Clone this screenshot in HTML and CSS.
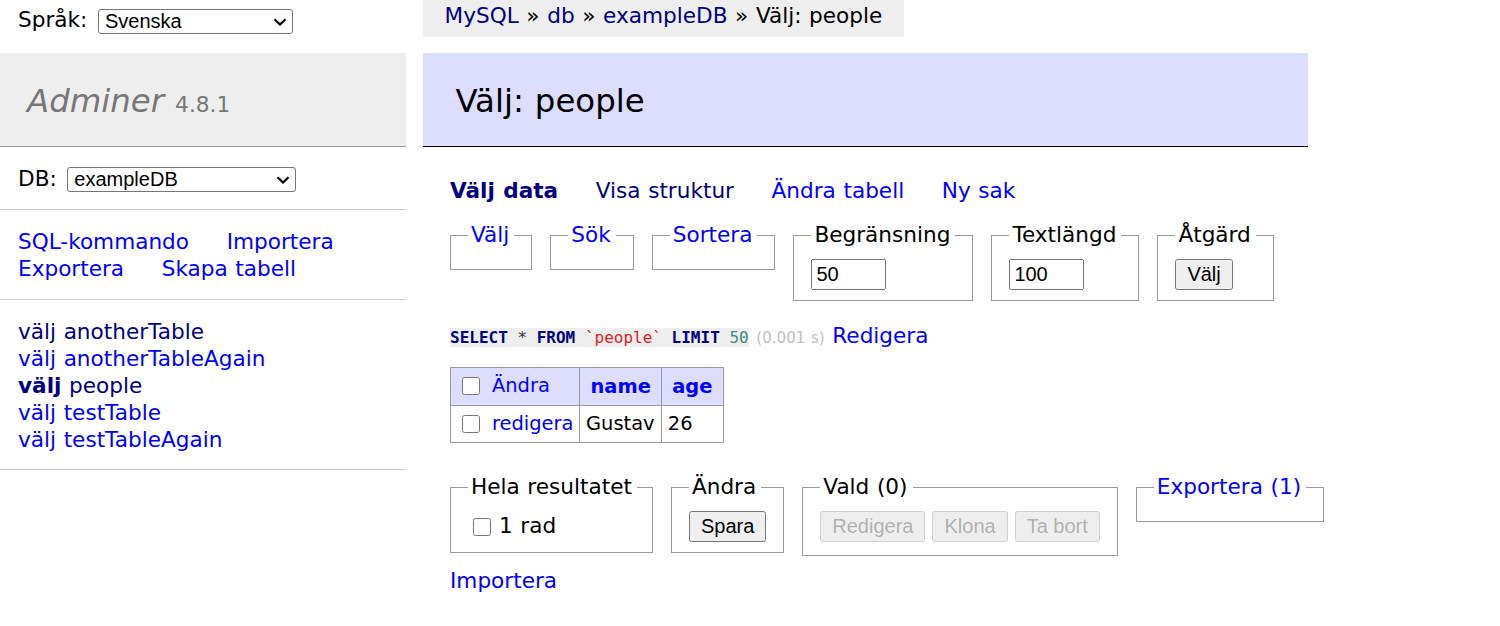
FILE: index.html
```html
<!DOCTYPE html>
<html lang="sv">
<head>
<meta charset="utf-8">
<title>Välj: people - exampleDB - Adminer</title>
<link rel="stylesheet" href="styles.css">
</head>
<body>
<div class="page">
  <aside class="sidebar">
    <form class="lang">
      <label>Språk: <span class="select-wrap select-lang"><select class="select"><option>Svenska</option></select><svg class="chevron" viewBox="0 0 14 8" aria-hidden="true"><path d="M1.5 1.2 7 6.5l5.5-5.3"/></svg></span></label>
    </form>
    <div class="menu">
      <h1 class="logo"><a class="logo-name" href="#">Adminer</a> <span class="version">4.8.1</span></h1>
      <p class="menu-section db-row">DB: <span class="select-wrap select-db"><select class="select"><option>exampleDB</option></select><svg class="chevron" viewBox="0 0 14 8" aria-hidden="true"><path d="M1.5 1.2 7 6.5l5.5-5.3"/></svg></span></p>
      <p class="menu-section menu-links links"><a href="#">SQL-kommando</a> <a href="#">Importera</a> <a href="#">Exportera</a> <a href="#">Skapa tabell</a></p>
      <ul class="menu-section tables">
        <li><a class="visited" href="#">välj</a> <a class="visited" href="#">anotherTable</a></li>
        <li><a href="#">välj</a> <a href="#">anotherTableAgain</a></li>
        <li><a class="visited active" href="#">välj</a> <a class="visited" href="#">people</a></li>
        <li><a href="#">välj</a> <a href="#">testTable</a></li>
        <li><a href="#">välj</a> <a href="#">testTableAgain</a></li>
      </ul>
    </div>
  </aside>
  <main class="main">
    <p class="breadcrumb"><a class="visited" href="#">MySQL</a> » <a class="visited" href="#">db</a> » <a class="visited" href="#">exampleDB</a> » Välj: people</p>
    <h2 class="title">Välj: people</h2>
    <div class="content">
      <p class="links tabs"><a class="visited active" href="#">Välj data</a> <a class="visited" href="#">Visa struktur</a> <a href="#">Ändra tabell</a> <a href="#">Ny sak</a></p>
      <form class="fs-row fs-top">
        <fieldset><legend><a href="#">Välj</a></legend></fieldset>
        <fieldset><legend><a href="#">Sök</a></legend></fieldset>
        <fieldset><legend><a href="#">Sortera</a></legend></fieldset>
        <fieldset><legend>Begränsning</legend><input class="num" type="text" value="50"></fieldset>
        <fieldset><legend>Textlängd</legend><input class="num" type="text" value="100"></fieldset>
        <fieldset><legend>Åtgärd</legend><button type="button" class="btn">Välj</button></fieldset>
      </form>
      <p class="sql"><code class="jush"><a class="kw" href="#">SELECT</a> <span class="op">*</span> <a class="kw" href="#">FROM</a> <span class="bac">`people`</span> <a class="kw" href="#">LIMIT</a> <span class="num-lit">50</span></code> <span class="time">(0.001 s)</span> <a href="#">Redigera</a></p>
      <table class="data">
        <thead>
          <tr>
            <td><input type="checkbox" class="check"> <a href="#">Ändra</a></td>
            <th><a href="#">name</a></th>
            <th><a href="#">age</a></th>
          </tr>
        </thead>
        <tbody>
          <tr>
            <td><input type="checkbox" class="check"> <a href="#">redigera</a></td>
            <td>Gustav</td>
            <td>26</td>
          </tr>
        </tbody>
      </table>
      <div class="footer">
        <div class="fs-row fs-footer">
          <fieldset><legend>Hela resultatet</legend><label class="all"><input type="checkbox" class="check check-all">1 rad</label></fieldset>
          <fieldset><legend>Ändra</legend><button type="button" class="btn">Spara</button></fieldset>
          <fieldset><legend>Vald (0)</legend><div class="btn-group"><button type="button" class="btn" disabled>Redigera</button><button type="button" class="btn" disabled>Klona</button><button type="button" class="btn" disabled>Ta bort</button></div></fieldset>
          <fieldset><legend><a href="#">Exportera (1)</a></legend></fieldset>
        </div>
        <p class="import"><a href="#">Importera</a></p>
      </div>
    </div>
  </main>
</div>
</body>
</html>
```

FILE: styles.css
```css
html, body {
  margin: 0;
  padding: 0;
}

body {
  font: 21.6px/1.25 "DejaVu Sans", Verdana, sans-serif;
  word-spacing: 0.75px;
  color: #000;
  background: #fff;
}

a {
  color: #0000ff;
  text-decoration: none;
}

a.visited {
  color: #000080;
}

.active {
  font-weight: bold;
}

.page {
  display: flex;
  align-items: flex-start;
  gap: 17px;
  width: 1500px;
}

/* ---------- sidebar ---------- */
.sidebar {
  width: 406px;
  flex: none;
}

.lang {
  margin: 0;
  height: 53px;
  padding: 0 18px;
  line-height: 39px;
}

.select-wrap {
  position: relative;
  display: inline-block;
  vertical-align: middle;
  margin-left: 3px;
  height: 25px;
  line-height: 0;
}

.select-lang {
  width: 195px;
}

.select-db {
  width: 229px;
}

.select {
  -webkit-appearance: none;
  appearance: none;
  box-sizing: border-box;
  width: 100%;
  height: 25px;
  margin: 0;
  padding: 0 26px 0 6px;
  font: 20px/23px "Liberation Sans", Arial, sans-serif;
  word-spacing: 0;
  color: #000;
  background: #fff;
  border: 1px solid #767676;
  border-radius: 3px;
}

.chevron {
  position: absolute;
  right: 6px;
  top: 9px;
  width: 14px;
  height: 8px;
  fill: none;
  stroke: #000;
  stroke-width: 2.2;
  pointer-events: none;
}

.logo {
  margin: 0;
  padding: 28px 27px 24px;
  font-size: 32.4px;
  line-height: 40.5px;
  font-weight: normal;
  background: #eee;
  border-bottom: 1px solid #999;
}

.logo-name {
  color: #777;
  font-style: italic;
}

.version {
  color: #777;
  font-size: 21.7px;
  line-height: 1;
}

.menu-section {
  margin: 0;
  padding: 17px 18px;
  border-bottom: 1px solid #ccc;
}

.db-row {
  padding-top: 19px;
  padding-bottom: 17px;
}

.menu-links {
  padding-top: 19px;
  padding-bottom: 16px;
}

.links a {
  white-space: nowrap;
  margin-right: 30px;
}

.tables {
  list-style: none;
  white-space: nowrap;
  padding-top: 19px;
  padding-bottom: 15px;
}

/* ---------- main ---------- */
.main {
  width: 885px;
  flex: none;
}

.breadcrumb {
  width: fit-content;
  margin: 0 0 16px;
  height: 37px;
  padding: 0 21.6px;
  line-height: 31px;
  background: #eee;
  white-space: nowrap;
}

.title {
  margin: 0;
  padding: 28px 32.4px 24px;
  font-size: 32.4px;
  line-height: 40.5px;
  font-weight: normal;
  background: #ddf;
  border-bottom: 1px solid #000;
}

.content {
  padding-left: 27px;
}

.tabs {
  margin: 31px 0 0;
}

.fs-row {
  display: flex;
  align-items: flex-start;
  gap: 18px;
  margin: 0;
}

.fs-top {
  margin-top: 18px;
}

fieldset {
  flex: none;
  margin: 0;
  padding: 10px 17px;
  border: 1px solid #999;
  min-width: 0;
}

legend {
  padding: 0 5px 0 3px;
  white-space: nowrap;
}

.num {
  box-sizing: border-box;
  width: 75px;
  height: 31px;
  padding: 1px 3px;
  font: 20px "Liberation Sans", Arial, sans-serif;
  display: block;
}

.btn {
  box-sizing: border-box;
  height: 31px;
  padding: 0 10px;
  font: 20px "Liberation Sans", Arial, sans-serif;
  word-spacing: 0;
  white-space: nowrap;
  display: block;
}

.btn-group {
  display: flex;
  gap: 7px;
  padding-bottom: 3px;
}

.sql {
  margin: 22px 0 0;
}

.jush {
  font: 16px "DejaVu Sans Mono", monospace;
  word-spacing: 0;
  background: #eee;
}

.jush .kw {
  color: #000080;
  font-weight: bold;
}

.jush .op {
  color: #333;
}

.jush .bac {
  color: #d22;
}

.jush .num-lit {
  color: #4a8585;
}

.time {
  color: silver;
  font-size: 15.1px;
}

.data {
  margin-top: 17px;
  border-collapse: collapse;
  font-size: 19.44px;
  line-height: 1.25;
  word-spacing: 0;
}

.data td,
.data th {
  border: 1px solid #999;
  padding: 3.9px 5.8px;
  white-space: pre;
}

.data thead td,
.data thead th {
  background: #ddf;
}

.data thead th {
  text-align: center;
  padding: 3.9px 10.2px;
}

.check {
  width: 18px;
  height: 18px;
  margin: 5px 6px 5px 5px;
  vertical-align: middle;
}

.data thead .check {
  margin-bottom: 6px;
}

.footer {
  margin-right: -40px;
}

.fs-footer {
  margin-top: 31px;
}

.fs-footer fieldset:first-child {
  padding-right: 15px;
}

.all {
  display: flex;
  align-items: center;
  height: 31px;
}

.check-all {
  margin: 0 8px 0 5px;
}

.import {
  margin: 12px 0 0;
}
```
